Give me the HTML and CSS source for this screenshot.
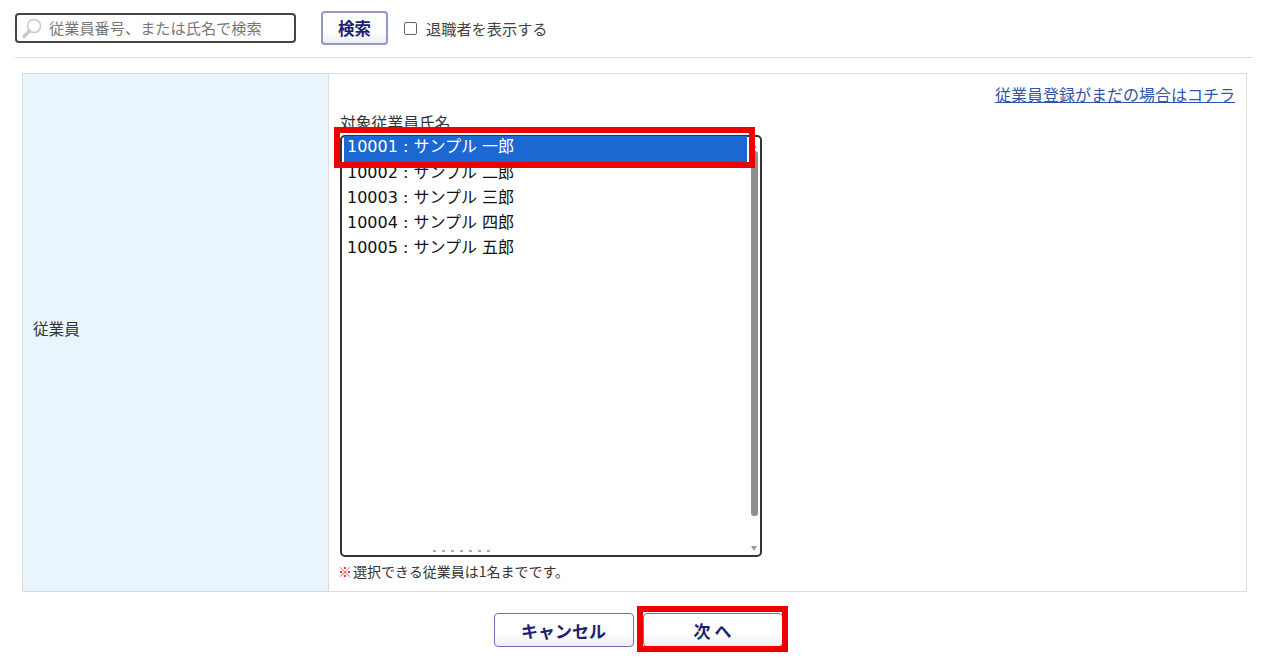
FILE: index.html
```html
<!DOCTYPE html>
<html lang="ja">
<head>
    <meta charset="UTF-8">
    <meta name="viewport" content="width=device-width, initial-scale=1.0">
    <title>従業員選択</title>
    <link rel="stylesheet" href="styles.css">
</head>
<body>

    <!-- Search bar -->
    <div class="search-bar">
        <div class="search-input">
            <svg class="search-icon" width="22" height="22" viewBox="0 0 22 22" fill="none">
                <circle cx="13" cy="9" r="6.5" stroke="#c9c9c9" stroke-width="1.5"/>
                <path d="M8.5 14 L3 19.5" stroke="#c9c9c9" stroke-width="3.5" stroke-linecap="round"/>
            </svg>
            <span class="placeholder">従業員番号、または氏名で検索</span>
        </div>
        <button class="btn btn-search">検索</button>
        <label class="retired">
            <span class="check"></span>
            <span>退職者を表示する</span>
        </label>
    </div>

    <hr class="divider">

    <!-- Employee form -->
    <div class="form-table">
        <div class="form-label">従業員</div>
        <div class="form-body">
            <div class="link-row"><a class="register-link" href="#">従業員登録がまだの場合はコチラ</a></div>
            <div class="list-title">対象従業員氏名</div>
            <div class="listbox">
                <div class="list-item selected">10001 : サンプル 一郎</div>
                <div class="list-item">10002 : サンプル 二郎</div>
                <div class="list-item">10003 : サンプル 三郎</div>
                <div class="list-item">10004 : サンプル 四郎</div>
                <div class="list-item">10005 : サンプル 五郎</div>
                <div class="list-clipped"></div>
                <div class="scrollbar">
                    <span class="arrow-up"></span>
                    <span class="thumb"></span>
                    <span class="arrow-down"></span>
                </div>
                <div class="highlight highlight-row"></div>
            </div>
            <p class="note"><span class="mark">※</span>選択できる従業員は1名までです。</p>
        </div>
    </div>

    <!-- Buttons -->
    <div class="actions">
        <button class="btn btn-action">キャンセル</button>
        <div class="next-wrap">
            <button class="btn btn-action">次 へ</button>
            <div class="highlight highlight-next"></div>
        </div>
    </div>

</body>
</html>
```

FILE: styles.css
```css
body {
    margin: 0;
    min-height: 665px;
    background: #fff;
    color: #333;
    font-family: "Noto Sans CJK JP", "Noto Sans", sans-serif;
}

.search-bar {
    display: flex;
    align-items: center;
    height: 30px;
    padding: 13px 15px 0;
}

.search-input {
    display: flex;
    align-items: center;
    box-sizing: border-box;
    width: 281px;
    height: 30px;
    border: 2px solid #444;
    border-radius: 4px;
    padding-left: 4px;
}

.search-icon {
    flex: none;
    margin-right: 6px;
}

.placeholder {
    color: #777;
    font-size: 15.2px;
    line-height: 1;
    white-space: nowrap;
}

.btn {
    box-sizing: border-box;
    border: 1px solid #6a74b4;
    border-radius: 4px;
    background: linear-gradient(#fff 60%, #eceef5);
    color: #1c2270;
    font-family: inherit;
    font-weight: 700;
    cursor: pointer;
    padding: 0;
}

.btn-search {
    width: 67px;
    height: 34px;
    margin: 0 0 0 25px;
    border: 2px solid #8f97cb;
    font-size: 16.5px;
}

.retired {
    display: flex;
    align-items: center;
    margin-left: 16px;
    font-size: 15.2px;
    color: #444;
}

.check {
    box-sizing: border-box;
    width: 13px;
    height: 13px;
    border: 1px solid #666;
    border-radius: 2px;
    margin-right: 9px;
}

.divider {
    height: 1px;
    border: 0;
    background: #ddd;
    margin: 14px 8px 15px 15px;
}

.form-table {
    display: flex;
    box-sizing: border-box;
    height: 519px;
    margin: 0 14px 0 22px;
    border: 1px solid #d9dde0;
}

.form-label {
    display: flex;
    align-items: center;
    box-sizing: border-box;
    width: 306px;
    padding: 0 0 9px 10px;
    background: #eaf4fd;
    border-right: 1px solid #d9dde0;
    font-size: 15.6px;
}

.form-body {
    flex: 1;
    padding: 0 11px 0 11px;
}

.link-row {
    display: flex;
    justify-content: flex-end;
    height: 37px;
    padding-top: 8px;
    box-sizing: border-box;
}

.register-link {
    color: #2f55ad;
    font-size: 16px;
    line-height: 24px;
    height: 24px;
}

.list-title {
    font-size: 15.8px;
    line-height: 24px;
    height: 24px;
}

.listbox {
    position: relative;
    box-sizing: border-box;
    width: 422px;
    height: 422px;
    border: 2px solid #333;
    border-radius: 5px;
    padding: 0 13px 0 2px;
    background: #fff;
    color: #111;
    font-family: "DejaVu Sans", "Noto Sans CJK JP", sans-serif;
}

.list-item {
    height: 25px;
    line-height: 21px;
    padding-left: 3px;
    font-size: 16px;
    white-space: nowrap;
}

.list-item.selected {
    height: 26px;
    margin-top: -1px;
    line-height: 22px;
    background: #1c68d2;
    color: #fff;
}

/* top edge of the row scrolled past the bottom of the list */
.list-clipped {
    position: absolute;
    left: 91px;
    bottom: 3px;
    width: 58px;
    height: 2px;
    background: repeating-linear-gradient(90deg, #aaa 0 3px, transparent 3px 9px);
}

.scrollbar {
    position: absolute;
    top: 0;
    right: 1px;
    bottom: 0;
    width: 9px;
}

.thumb {
    position: absolute;
    top: 14px;
    bottom: 39px;
    left: 1px;
    width: 7px;
    border-radius: 3px;
    background: #8e8e8e;
}

.arrow-up,
.arrow-down {
    position: absolute;
    left: 1px;
    width: 0;
    height: 0;
    border-left: 3.5px solid transparent;
    border-right: 3.5px solid transparent;
}

.arrow-up {
    top: 6px;
    border-bottom: 5px solid #9a9a9a;
}

.arrow-down {
    bottom: 4px;
    border-top: 5px solid #9a9a9a;
}

.highlight {
    position: absolute;
    box-sizing: border-box;
    border: 6px solid #ee0000;
}

.highlight-row {
    top: -10px;
    left: -8px;
    width: 421px;
    height: 41px;
}

.note {
    margin: 4px 0 0 -2px;
    font-size: 14px;
    line-height: 20px;
    color: #333;
    white-space: nowrap;
}

.mark {
    color: #e8141c;
    font-weight: 700;
    margin-right: 1px;
}

.actions {
    display: flex;
    justify-content: center;
    gap: 9px;
    margin-top: 21px;
    padding-left: 15px;
}

.btn-action {
    display: block;
    width: 140px;
    height: 34px;
    font-size: 17px;
}

.next-wrap {
    position: relative;
}

.highlight-next {
    top: -7px;
    left: -6px;
    width: 151px;
    height: 46px;
}
```
